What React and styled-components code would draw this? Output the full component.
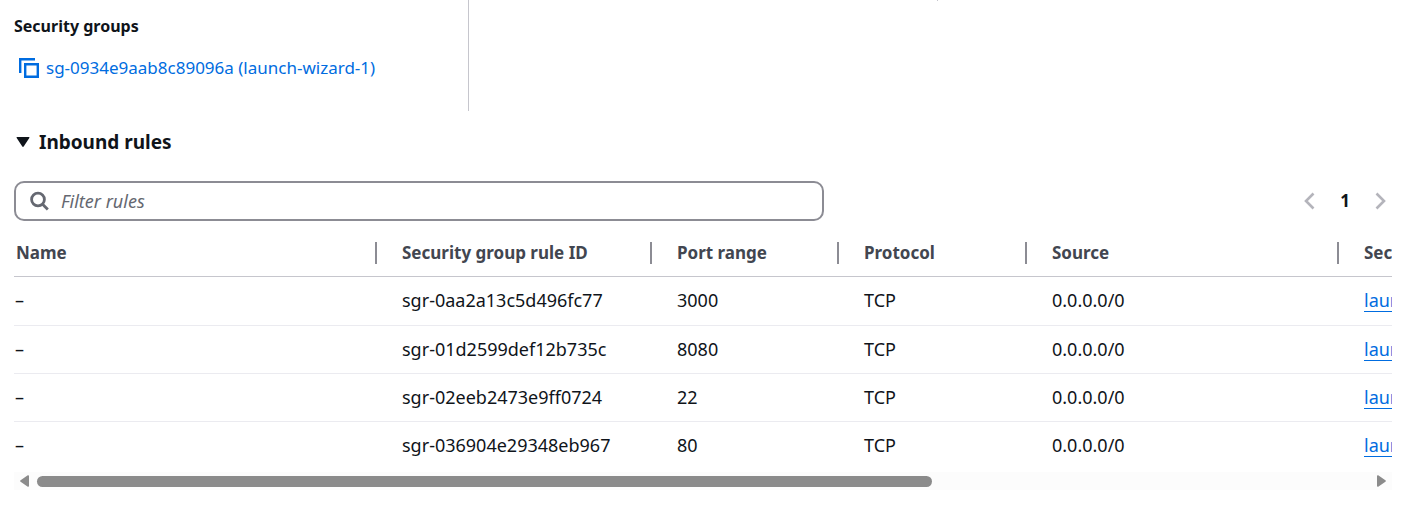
import React, { useEffect, useRef, useState } from "react";
import styled, { createGlobalStyle } from "styled-components";

const GlobalStyle = createGlobalStyle`
  *, *::before, *::after { box-sizing: border-box; }
  body {
    margin: 0;
    background: #fff;
    color: #0f141a;
    font-family: "Noto Sans", "Open Sans", sans-serif;
    font-size: 17px;
    line-height: 24px;
  }
`;

const Page = styled.main`
  overflow: hidden;
`;

const Details = styled.section`
  display: grid;
  grid-template-columns: repeat(3, 1fr);
  align-items: start;
  padding-right: 5px;
`;

const DetailColumn = styled.div`
  min-height: ${(p) => (p.$tall ? 111 : 1)}px;
  padding: ${(p) => (p.$tall ? "14px 14px 0" : "0 14px")};
  border-right: ${(p) => (p.$last ? "none" : "1px solid #c6c6cd")};
`;

const DetailLabel = styled.h3`
  margin: 0;
  font-size: 16px;
  line-height: 24px;
  font-weight: 700;
`;

const CopyRow = styled.div`
  display: flex;
  align-items: center;
  gap: 6px;
  margin-top: 18px;
  padding-left: 4px;
`;

const IconButton = styled.button`
  display: flex;
  padding: 0;
  border: 0;
  background: none;
  color: ${(p) => p.$color};
  cursor: pointer;
`;

const GroupLink = styled.a`
  color: #006ce0;
  text-decoration: none;
  white-space: nowrap;
`;

const Rules = styled.section`
  padding: 19px 20px 0 14px;
`;

const ExpandHeading = styled.h2`
  margin: 0;
  font-size: 19px;
  line-height: 24px;
`;

const ExpandButton = styled.button`
  display: flex;
  align-items: center;
  gap: 9px;
  padding: 0 0 0 2px;
  border: 0;
  background: none;
  color: inherit;
  font: inherit;
  cursor: pointer;
`;

const Toolbar = styled.div`
  display: flex;
  align-items: center;
  justify-content: space-between;
  gap: 24px;
  margin-top: 27px;
`;

const SearchBox = styled.label`
  display: flex;
  align-items: center;
  gap: 12px;
  flex: 0 1 810px;
  height: 40px;
  padding: 0 14px;
  border: 2px solid #8c8c94;
  border-radius: 10px;
  color: #656871;
`;

const SearchInput = styled.input`
  flex: 1;
  min-width: 0;
  padding: 0;
  border: 0;
  outline: 0;
  background: none;
  color: #0f141a;
  font: inherit;
  font-size: 18px;
  &::placeholder {
    color: #656871;
    font-style: italic;
    opacity: 1;
  }
`;

const Pagination = styled.nav`
  display: flex;
  align-items: center;
  gap: 25px;
  padding-right: 6px;
`;

const PageNumber = styled.button`
  padding: 0;
  border: 0;
  background: none;
  color: #0f141a;
  font: inherit;
  font-weight: 700;
`;

const TableScroller = styled.div`
  margin-top: 9px;
  overflow-x: auto;
  scrollbar-width: none;
`;

const Table = styled.table`
  width: 2050px;
  table-layout: fixed;
  border-collapse: separate;
  border-spacing: 0;
  text-align: left;
`;

const HeaderCell = styled.th`
  width: ${(p) => p.$width};
  height: 47px;
  padding: 0;
  border-bottom: 1px solid #c6c6cd;
  color: #424650;
  font-weight: 700;
`;

const HeaderLabel = styled.div`
  height: 22px;
  padding-left: ${(p) => (p.$first ? 2 : 25)}px;
  border-right: ${(p) => (p.$last ? "none" : "2px solid #8c8c94")};
  line-height: 22px;
  white-space: nowrap;
`;

const Row = styled.tr`
  height: 48px;
  &:first-child { height: 49px; }
  &:last-child td { border-bottom-color: transparent; }
`;

const Cell = styled.td`
  padding: 0 0 2px ${(p) => (p.$first ? 1 : 25)}px;
  border-bottom: 1px solid #ebebf0;
  font-size: 18px;
  white-space: nowrap;
`;

const SourceLink = styled.a`
  display: inline-block;
  border-bottom: 1px solid #006ce0;
  color: #006ce0;
  line-height: 22px;
  text-decoration: none;
`;

const Scrollbar = styled.div`
  display: flex;
  align-items: center;
  gap: 7px;
  height: 18px;
  margin-top: 2px;
  padding: 0 6px;
  background: #fcfcfc;
`;

const Track = styled.div`
  flex: 1;
  min-width: 0;
`;

const Thumb = styled.div`
  height: 11px;
  border-radius: 6px;
  background: #8b8b8b;
`;

const columns = [
  ["Name", "363px"],
  ["Security group rule ID", "275px"],
  ["Port range", "187px"],
  ["Protocol", "188px"],
  ["Source", "312px"],
  ["Security groups", "auto"],
];

const rules = [
  ["sgr-0aa2a13c5d496fc77", "3000"],
  ["sgr-01d2599def12b735c", "8080"],
  ["sgr-02eeb2473e9ff0724", "22"],
  ["sgr-036904e29348eb967", "80"],
];

const CopyIcon = () => (
  <svg width="22" height="22" viewBox="0 0 22 22" fill="none" stroke="currentColor" strokeWidth="2.4" aria-hidden="true">
    <path d="M2.200 16V2.200H17" />
    <path d="M7.200 7.200h12.600v12.600H7.200z" />
  </svg>
);

const SearchIcon = () => (
  <svg width="19" height="20" viewBox="0 0 19 20" fill="none" stroke="currentColor" strokeWidth="2.8" aria-hidden="true">
    <circle cx="8" cy="8.5" r="6.4" />
    <path d="m12.600 13.200 5.200 5.200" />
  </svg>
);

const Chevron = ({ next }) => (
  <svg width="11" height="18" viewBox="0 0 11 18" fill="none" stroke="currentColor" strokeWidth="2.6" aria-hidden="true">
    <path d={next ? "M1.5 1.5 9 9l-7.5 7.5" : "M9.5 1.5 2 9l7.5 7.5"} />
  </svg>
);

const CaretDown = () => (
  <svg width="14" height="12" viewBox="0 0 14 12" fill="currentColor" aria-hidden="true">
    <path d="M1.2 1h11.6c.6 0 .8.5.5.9L7.7 10.6c-.4.6-1 .6-1.4 0L.7 1.9C.4 1.5.6 1 1.2 1Z" />
  </svg>
);

const ScrollArrow = ({ next }) => (
  <svg width="10" height="12" viewBox="0 0 10 12" fill="#8b8b8b" aria-hidden="true">
    <path
      d={
        next
          ? "M1 .9C1 .2 1.700 0 2.200.3L9.400 5.200c.6.4.6 1.200 0 1.600L2.200 11.700C1.700 12 1 11.800 1 11.100Z"
          : "M9 .9C9 .2 8.300 0 7.800.3L.6 5.200c-.6.4-.6 1.200 0 1.600L7.800 11.700C8.300 12 9 11.800 9 11.100Z"
      }
    />
  </svg>
);

export default function App() {
  const scroller = useRef(null);
  const [thumb, setThumb] = useState({ size: 67, start: 0 });

  const measure = () => {
    const el = scroller.current;
    setThumb({
      size: (el.clientWidth / el.scrollWidth) * 100,
      start: (el.scrollLeft / el.scrollWidth) * 100,
    });
  };

  useEffect(() => {
    measure();
    window.addEventListener("resize", measure);
    return () => window.removeEventListener("resize", measure);
  }, []);

  const scrollBy = (left) => scroller.current.scrollBy({ left });

  return (
    <Page>
      <GlobalStyle />
      <Details>
        <DetailColumn $tall>
          <DetailLabel>Security groups</DetailLabel>
          <CopyRow>
            <IconButton type="button" $color="#006ce0" aria-label="Copy">
              <CopyIcon />
            </IconButton>
            <GroupLink href="#group">sg-0934e9aab8c89096a (launch-wizard-1)</GroupLink>
          </CopyRow>
        </DetailColumn>
        <DetailColumn />
        <DetailColumn $last />
      </Details>
      <Rules>
        <ExpandHeading>
          <ExpandButton type="button" aria-expanded="true">
            <CaretDown />
            Inbound rules
          </ExpandButton>
        </ExpandHeading>
        <Toolbar>
          <SearchBox>
            <SearchIcon />
            <SearchInput type="text" placeholder="Filter rules" aria-label="Filter rules" />
          </SearchBox>
          <Pagination aria-label="Pages">
            <IconButton type="button" $color="#b4b4bb" aria-label="Previous page">
              <Chevron />
            </IconButton>
            <PageNumber type="button">1</PageNumber>
            <IconButton type="button" $color="#b4b4bb" aria-label="Next page">
              <Chevron next />
            </IconButton>
          </Pagination>
        </Toolbar>
        <TableScroller ref={scroller} onScroll={measure}>
          <Table>
            <thead>
              <tr>
                {columns.map(([label, width], i) => (
                  <HeaderCell key={label} $width={width} scope="col">
                    <HeaderLabel $first={i === 0} $last={i === columns.length - 1}>
                      {label}
                    </HeaderLabel>
                  </HeaderCell>
                ))}
              </tr>
            </thead>
            <tbody>
              {rules.map(([id, port]) => (
                <Row key={id}>
                  <Cell $first>–</Cell>
                  <Cell>{id}</Cell>
                  <Cell>{port}</Cell>
                  <Cell>TCP</Cell>
                  <Cell>0.0.0.0/0</Cell>
                  <Cell>
                    <SourceLink href="#launch-wizard-1">launch-wizard-1</SourceLink>
                  </Cell>
                </Row>
              ))}
            </tbody>
          </Table>
        </TableScroller>
        <Scrollbar>
          <IconButton type="button" $color="#8b8b8b" aria-label="Scroll left" onClick={() => scrollBy(-80)}>
            <ScrollArrow />
          </IconButton>
          <Track>
            <Thumb style={{ width: `${thumb.size}%`, marginLeft: `${thumb.start}%` }} />
          </Track>
          <IconButton type="button" $color="#8b8b8b" aria-label="Scroll right" onClick={() => scrollBy(80)}>
            <ScrollArrow next />
          </IconButton>
        </Scrollbar>
      </Rules>
    </Page>
  );
}
